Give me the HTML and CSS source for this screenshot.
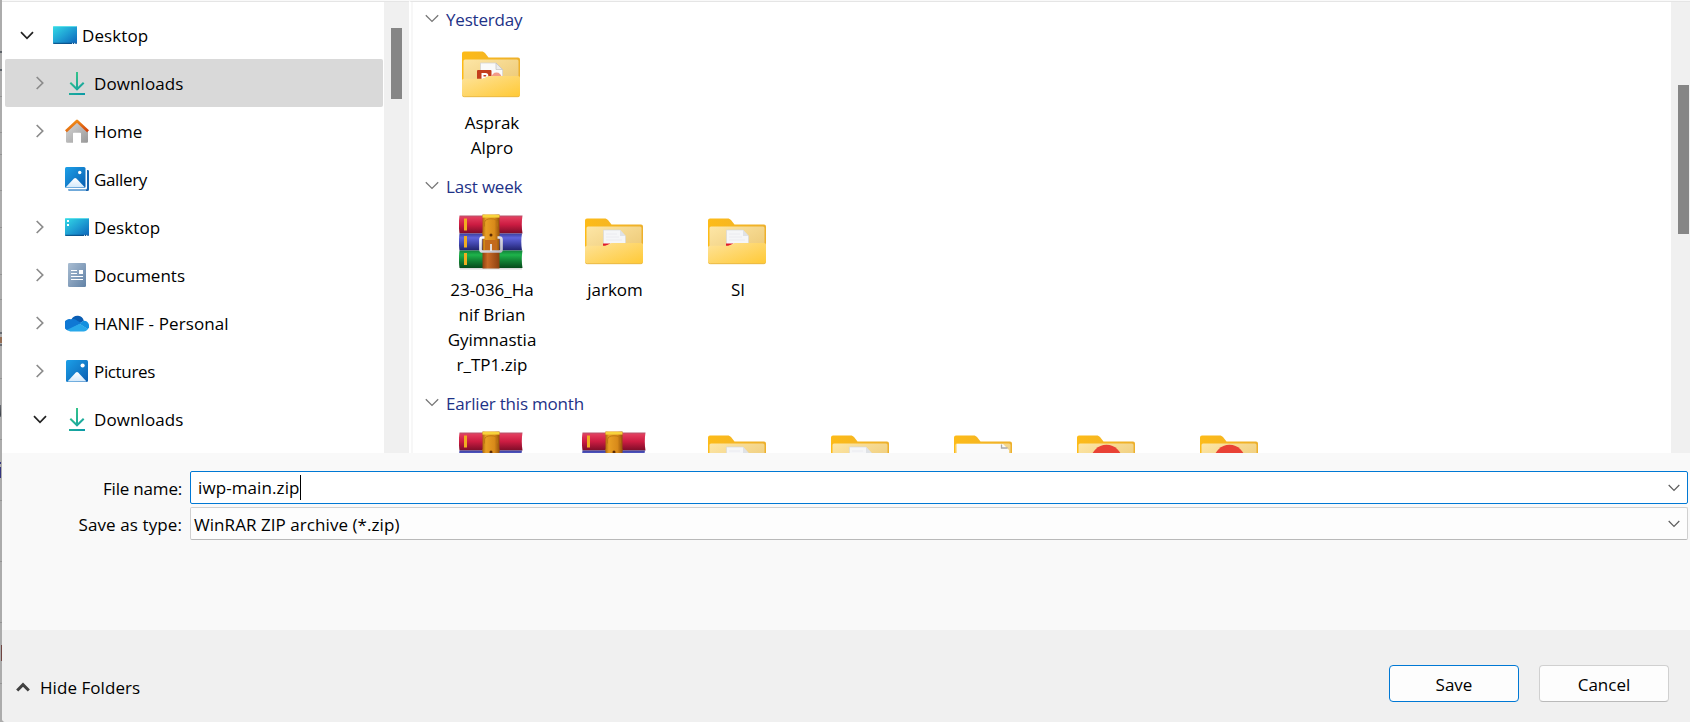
FILE: index.html
```html
<!DOCTYPE html>
<html lang="en">
<head>
<meta charset="utf-8">
<title>Save As</title>
<link rel="stylesheet" href="styles.css">
</head>
<body>
<svg class="defs" width="0" height="0" aria-hidden="true">
  <defs>
    <linearGradient id="g-desk" x1="0" y1="0" x2="1" y2="1"><stop offset="0" stop-color="#34dbe6"/><stop offset=".5" stop-color="#1fa0d4"/><stop offset="1" stop-color="#0b62b8"/></linearGradient>
    <linearGradient id="g-down" gradientUnits="userSpaceOnUse" x1="4" y1="2" x2="20" y2="22"><stop offset="0" stop-color="#3ccb85"/><stop offset="1" stop-color="#0d9ba6"/></linearGradient>
    <linearGradient id="g-roof" x1="0" y1="0" x2="1" y2="1"><stop offset="0" stop-color="#f9a01b"/><stop offset="1" stop-color="#d1410c"/></linearGradient>
    <linearGradient id="g-wall" x1="0" y1="0" x2="1" y2="1"><stop offset="0" stop-color="#dadada"/><stop offset="1" stop-color="#989898"/></linearGradient>
    <linearGradient id="g-pic" x1="0" y1="0" x2="1" y2="1"><stop offset="0" stop-color="#1ca0e8"/><stop offset="1" stop-color="#0a5db0"/></linearGradient>
    <linearGradient id="g-hill" x1="0" y1="0" x2="0" y2="1"><stop offset="0" stop-color="#ffffff"/><stop offset="1" stop-color="#d3e9fb"/></linearGradient>
    <linearGradient id="g-doc" x1="0" y1="0" x2="1" y2="1"><stop offset="0" stop-color="#a9bdd2"/><stop offset="1" stop-color="#6282a6"/></linearGradient>
    <linearGradient id="g-inner" x1="0" y1="0" x2="1" y2="1"><stop offset="0" stop-color="#fde6a6"/><stop offset="1" stop-color="#ebc671"/></linearGradient>
    <linearGradient id="g-front" x1="0" y1="0" x2="1" y2="1"><stop offset="0" stop-color="#fee39a"/><stop offset="1" stop-color="#ffc935"/></linearGradient>
    <linearGradient id="g-back" x1="0" y1="0" x2="1" y2="0"><stop offset="0" stop-color="#fdbb18"/><stop offset="1" stop-color="#edb02c"/></linearGradient>
    <linearGradient id="g-red" x1="0" y1="0" x2="0" y2="1"><stop offset="0" stop-color="#b8566d"/><stop offset=".12" stop-color="#e23b5c"/><stop offset=".5" stop-color="#cc1c42"/><stop offset="1" stop-color="#7c0d28"/></linearGradient>
    <linearGradient id="g-blue" x1="0" y1="0" x2="0" y2="1"><stop offset="0" stop-color="#3b3f9c"/><stop offset=".25" stop-color="#5f64dc"/><stop offset=".6" stop-color="#4145ac"/><stop offset="1" stop-color="#20226a"/></linearGradient>
    <linearGradient id="g-green" x1="0" y1="0" x2="0" y2="1"><stop offset="0" stop-color="#12803a"/><stop offset=".25" stop-color="#1eb34b"/><stop offset=".6" stop-color="#118033"/><stop offset="1" stop-color="#064a1b"/></linearGradient>
    <linearGradient id="g-strap" x1="0" y1="0" x2="1" y2="0"><stop offset="0" stop-color="#b06a0c"/><stop offset=".2" stop-color="#e89f24"/><stop offset=".7" stop-color="#d88a1a"/><stop offset="1" stop-color="#96520a"/></linearGradient>
    <linearGradient id="g-strap2" x1="0" y1="0" x2="1" y2="0"><stop offset="0" stop-color="#8e4010"/><stop offset=".3" stop-color="#c96a26"/><stop offset="1" stop-color="#8a400f"/></linearGradient>
    <linearGradient id="g-buckle" x1="0" y1="0" x2="1" y2="1"><stop offset="0" stop-color="#ffffff"/><stop offset="1" stop-color="#b9b9c5"/></linearGradient>

    <symbol id="i-open" viewBox="0 0 14 9"><path d="M1 1.2 7 7.4 13 1.2" fill="none" stroke="#222" stroke-width="1.7"/></symbol>
    <symbol id="i-closed" viewBox="0 0 9 14"><path d="M1.2 1 7.2 7 1.2 13" fill="none" stroke="#8b8b8b" stroke-width="1.7"/></symbol>
    <symbol id="i-group" viewBox="0 0 14 9"><path d="M.8 1.2 7 7.4 13.2 1.2" fill="none" stroke="#777" stroke-width="1.3"/></symbol>
    <symbol id="i-desk" viewBox="0 0 24 24"><rect y="3" width="24" height="18" rx="1.3" fill="url(#g-desk)"/><path d="M.3 20.3h23.4" stroke="#0b4a80" stroke-width="1"/><path d="M0.8 3.5h22.4" stroke="#69e6ee" stroke-width=".8"/><path d="M19 20.4h1m1 0h1m.6 0h.6" stroke="#d6ebf7" stroke-width="1"/></symbol>
    <symbol id="i-desk2" viewBox="0 0 24 24"><use href="#i-desk"/><path d="M2 5h2v2H2zM2 9h2v2H2z" fill="#fff"/></symbol>
    <symbol id="i-down" viewBox="0 0 24 24"><path d="M12 1v17.2M5.3 11.7 12 18.3l6.700-6.600M4 23h16" fill="none" stroke="url(#g-down)" stroke-width="2"/></symbol>
    <symbol id="i-home" viewBox="0 0 24 24"><path d="M1 12 12 2l11 10v10.500a1.200 1.200 0 0 1-1.200 1.200H16V14.500a.8.800 0 0 0-.8-.8H8.800a.8.800 0 0 0-.8.800v9.200H2.200A1.200 1.200 0 0 1 1 22.500z" fill="url(#g-wall)"/><path d="M.9 12.300 12 2l11.100 10.300" fill="none" stroke="url(#g-roof)" stroke-width="2.800" stroke-linejoin="round"/></symbol>
    <symbol id="i-gal" viewBox="0 0 24 24"><path d="M22 3h.7a1.300 1.300 0 0 1 1.300 1.300V22.500a1.500 1.500 0 0 1-1.500 1.500H5a2 2 0 0 1-2-1.500h17.500a1.500 1.500 0 0 0 1.500-1.500z" fill="#1763ad"/><path d="M3 22.500h18v1.500H5a2 2 0 0 1-2-1.500z" fill="#6fa9da"/><rect width="20.500" height="21" rx="1.500" fill="url(#g-pic)"/><path d="M.5 20.500 9 11.600a1.700 1.700 0 0 1 2.400 0l8.600 8.900z" fill="url(#g-hill)"/><circle cx="14.700" cy="5.500" r="1.700" fill="#fff"/></symbol>
    <symbol id="i-pic" viewBox="0 0 24 24"><rect x="1" y="1" width="22" height="22" rx="1.500" fill="url(#g-pic)"/><path d="M2.500 22.500 10.800 13.500a1.700 1.700 0 0 1 2.400 0l8.300 9z" fill="url(#g-hill)"/><circle cx="17.600" cy="6.500" r="2.100" fill="#fff"/></symbol>
    <symbol id="i-doc" viewBox="0 0 24 24"><rect x="3" width="18" height="24" rx="1.300" fill="url(#g-doc)"/><path d="M6 7.500h6M6 10.500h6M6 13.500h12M6 16.500h12" stroke="#fff" stroke-width="1"/><rect x="14" y="7" width="4" height="4" fill="#fff"/></symbol>
    <symbol id="i-cloud" viewBox="0 0 24 24"><path d="M6.500 8.300A6.600 6.600 0 0 1 18.800 9.700L12 14z" fill="#0a5db3"/><path d="M6 8.300c2-.5 4.200 0 5.900 1.200l4.600 2.800L3 19.500A5.700 5.700 0 0 1 6 8.300z" fill="#0f78d4"/><path d="M18.800 9.700a5.100 5.100 0 0 1 3.900 8.600l-8-5.400c1.300-1.700 2.300-2.700 4.100-3.200z" fill="#1490df"/><path d="M2.200 18.700 14.700 12.700l8.200 5.300c-1 1.600-2.300 2.500-4.200 2.500H6.500c-1.800 0-3.200-.6-4.300-1.800z" fill="#28a8ea"/></symbol>

    <symbol id="i-fback" viewBox="0 0 64 64"><path d="M3 11.500a2 2 0 0 1 2-2h17.500c1.600 0 2.600.5 3.500 1.600l3.500 4.400h29.500a2 2 0 0 1 2 2V45H3z" fill="url(#g-back)"/><path d="M4.500 19a1.500 1.500 0 0 1 1.500-1.500h52a1.500 1.500 0 0 1 1.500 1.500V45H4.500z" fill="url(#g-inner)"/></symbol>
    <symbol id="i-ffront" viewBox="0 0 64 64"><path d="M3 38.200q0-1.500 2-1.500h17c3.500 0 5-2.800 9-2.800h28q2 0 2 1.500V52.800a2 2 0 0 1-2 2H5a2 2 0 0 1-2-2z" fill="url(#g-front)"/><path d="M3.300 53.700q.6 1 2 1h53.400q1.400 0 2-1" fill="none" stroke="#e5ac2c" stroke-width=".8"/></symbol>
    <symbol id="i-paper" viewBox="0 0 64 64"><path d="M21.500 21h16.500l5.500 6V40H21.500z" fill="#f5f6f8" stroke="#d9d9d9" stroke-width=".7"/><path d="M38 21v6h5.500" fill="#dfe2e6"/><path d="M24 25h11M24 28h13M24 31h16" stroke="#e8eaed" stroke-width=".8"/></symbol>
    <symbol id="i-folder" viewBox="0 0 64 64"><use href="#i-fback"/><use href="#i-paper"/><path d="M21 34.500h7.500L24 38h-3z" fill="#e01c2c"/><use href="#i-ffront"/></symbol>
    <symbol id="i-folder-paper" viewBox="0 0 64 64"><use href="#i-fback"/><use href="#i-paper"/><use href="#i-ffront"/></symbol>
    <symbol id="i-folder-sheet" viewBox="0 0 64 64"><use href="#i-fback"/><path d="M6 18h46l6 6V40H6z" fill="#fafafa"/><path d="M50.500 18.500v3.500h6" fill="none" stroke="#a8a8a8" stroke-width="1.300"/><use href="#i-ffront"/></symbol>
    <symbol id="i-folder-red" viewBox="0 0 64 64"><use href="#i-fback"/><circle cx="32.500" cy="34.500" r="15.700" fill="#e94235"/><use href="#i-ffront"/></symbol>
    <symbol id="i-folder-ppt" viewBox="0 0 64 64"><use href="#i-fback"/><path d="M21.500 21h15.500l6.500 6.500V40H21.500z" fill="#fafafa" stroke="#d4d4d4" stroke-width=".8"/><path d="M37 21v6.500h6.500z" fill="#ececec" stroke="#bbb" stroke-width=".6"/><circle cx="37.500" cy="35.500" r="5" fill="#f39a88"/><rect x="18" y="28" width="14.500" height="13" rx="1" fill="#c43e1c"/><path d="M23.500 38v-6h3a1.800 1.800 0 0 1 0 3.600h-2.500" fill="none" stroke="#fff" stroke-width="2"/><use href="#i-ffront"/></symbol>
    <symbol id="i-rar" viewBox="0 0 64 64">
      <path d="M1 59h62v1.500H1z" fill="#000" opacity=".14"/>
      <path d="M.5 6.500h63q-1.400 9 0 18H.5q-1.200-9 0-18z" fill="url(#g-red)"/>
      <path d="M.5 24.500h62.500q-1.400 8 0 17H.5q-1.200-8.500 0-17z" fill="url(#g-blue)"/>
      <path d="M.5 41.500h63q-1.400 9 0 17.500H.5q-1.200-9 0-17.500z" fill="url(#g-green)"/>
      <path d="M5 9.500H8v12H5zM5 27H8v11.500H5zM5 44H8v12H5z" fill="#f0ad20"/>
      <path d="M23.500 5.500h17V25h-17z" fill="url(#g-strap)"/><path d="M23.500 5.800h17v2.800h-17z" fill="#f7d33c"/><path d="M25.500 17.500v-4c0-5 13-5 13 0v4" fill="none" stroke="#b97510" stroke-width=".8"/>
      <path d="M23.500 23h17v19.500h-17z" fill="url(#g-strap)"/><path d="M26 31h12v10H26z" fill="#c36a1c"/><path d="M23.500 41.500h17v18h-17z" fill="url(#g-strap2)"/>
      <circle cx="32" cy="26" r="1.500" fill="#5d2b05"/>
      <path d="M25.500 28.500h-2a2 2 0 0 0-2 2V40.500a2 2 0 0 0 2 2h17a2 2 0 0 0 2-2v-10a2 2 0 0 0-2-2H38.500" fill="none" stroke="url(#g-buckle)" stroke-width="2.700"/><path d="M32 35v7" stroke="#e9e9ee" stroke-width="1.800"/>
    </symbol>
  </defs>
</svg>

<div class="screen">
  <svg class="edge" viewBox="0 0 2 722" width="2" height="722">
    <rect width="2" height="722" fill="#acacac"/>
    <path d="M0 52h2M0 70h2" stroke="#5f646a" stroke-width="2"/>
    <path d="M0 96.500h2M0 132.500h2M0 154.500h2M0 190.500h2M0 227.500h2M0 274.500h2M0 299.500h2M0 378.500h2M0 439.500h2M0 500.500h2M0 561.500h2M0 622.500h2M0 683.500h2" stroke="#949494"/>
    <path d="M0 333h2M0 345h2M0 405v11h1" stroke="#50555f" stroke-width="1.500"/><path d="M1 337v6" stroke="#8c5a38" stroke-width="1.500"/>
    <path d="M.5 462v2M.5 467v11" stroke="#35357f"/><path d="M1.500 645v16" stroke="#704542"/>
  </svg>
  <div class="dialog">
    <div class="browser">
      <nav class="tree">
        <div class="row root"><svg class="chev open"><use href="#i-open"/></svg><svg class="ico"><use href="#i-desk"/></svg><span class="loose">Desktop</span></div>
        <div class="row selected"><svg class="chev"><use href="#i-closed"/></svg><svg class="ico"><use href="#i-down"/></svg><span class="loose">Downloads</span></div>
        <div class="row"><svg class="chev"><use href="#i-closed"/></svg><svg class="ico"><use href="#i-home"/></svg><span class="loose">Home</span></div>
        <div class="row"><svg class="chev"></svg><svg class="ico gallery"><use href="#i-gal"/></svg><span class="tight">Gallery</span></div>
        <div class="row"><svg class="chev"><use href="#i-closed"/></svg><svg class="ico"><use href="#i-desk2"/></svg><span class="loose">Desktop</span></div>
        <div class="row"><svg class="chev"><use href="#i-closed"/></svg><svg class="ico"><use href="#i-doc"/></svg><span>Documents</span></div>
        <div class="row"><svg class="chev"><use href="#i-closed"/></svg><svg class="ico"><use href="#i-cloud"/></svg><span class="loose">HANIF - Personal</span></div>
        <div class="row"><svg class="chev"><use href="#i-closed"/></svg><svg class="ico"><use href="#i-pic"/></svg><span class="tight">Pictures</span></div>
        <div class="row"><svg class="chev open"><use href="#i-open"/></svg><svg class="ico"><use href="#i-down"/></svg><span class="loose">Downloads</span></div>
      </nav>
      <div class="scroll tree-scroll"><div class="thumb"></div></div>
      <div class="splitter"></div>
      <main class="files">
        <section class="group">
          <h2 class="group-title"><svg class="gchev"><use href="#i-group"/></svg>Yesterday</h2>
          <div class="items">
            <div class="item"><svg class="big"><use href="#i-folder-ppt"/></svg><span>Asprak<br>Alpro</span></div>
          </div>
        </section>
        <section class="group">
          <h2 class="group-title"><svg class="gchev"><use href="#i-group"/></svg>Last week</h2>
          <div class="items">
            <div class="item"><svg class="big"><use href="#i-rar"/></svg><span>23-036_Ha<br>nif Brian<br>Gyimnastia<br>r_TP1.zip</span></div>
            <div class="item"><svg class="big"><use href="#i-folder"/></svg><span>jarkom</span></div>
            <div class="item"><svg class="big"><use href="#i-folder"/></svg><span>SI</span></div>
          </div>
        </section>
        <section class="group">
          <h2 class="group-title"><svg class="gchev"><use href="#i-group"/></svg>Earlier this month</h2>
          <div class="items">
            <div class="item"><svg class="big"><use href="#i-rar"/></svg></div>
            <div class="item"><svg class="big"><use href="#i-rar"/></svg></div>
            <div class="item"><svg class="big"><use href="#i-folder-paper"/></svg></div>
            <div class="item"><svg class="big"><use href="#i-folder-paper"/></svg></div>
            <div class="item"><svg class="big"><use href="#i-folder-sheet"/></svg></div>
            <div class="item"><svg class="big"><use href="#i-folder-red"/></svg></div>
            <div class="item"><svg class="big"><use href="#i-folder-red"/></svg></div>
          </div>
        </section>
      </main>
      <div class="scroll file-scroll"><div class="thumb"></div></div>
    </div>
    <div class="form">
      <div class="label name-label">File name:</div>
      <div class="field focus"><span class="loose">iwp-main.zip</span><i class="caret"></i><svg class="drop" viewBox="0 0 12 8"><path d="M.7 1 6 6.500 11.300 1" fill="none" stroke="#5c5c5c" stroke-width="1.200"/></svg></div>
      <div class="label loose">Save as type:</div>
      <div class="field type"><span class="wide">WinRAR ZIP archive (*.zip)</span><svg class="drop" viewBox="0 0 12 8"><path d="M.7 1 6 6.500 11.300 1" fill="none" stroke="#5c5c5c" stroke-width="1.200"/></svg></div>
    </div>
    <footer class="footer">
      <div class="hide"><svg class="up" viewBox="0 0 14 10"><path d="M1.200 8.500 7 2.700l5.800 5.800" fill="none" stroke="#404040" stroke-width="3"/></svg><span class="wide">Hide Folders</span></div>
      <div class="actions"><button class="btn primary">Save</button><button class="btn">Cancel</button></div>
    </footer>
  </div>
</div>
</body>
</html>
```
FILE: styles.css
```css
* { box-sizing: border-box; }
body { margin: 0; font: 17px/25px "Open Sans", "Noto Sans", sans-serif; color: #000; overflow: hidden; }
.defs { position: absolute; }
svg { display: block; flex: none; }
.screen { display: flex; width: 1690px; height: 722px; overflow: hidden; background: #acacac; }
.edge { width: 2px; height: 722px; }
.dialog { flex: 1; min-width: 0; display: flex; flex-direction: column; background: #f9f9f9; border-bottom-left-radius: 4px; }
.browser { display: flex; height: 453px; padding-top: 1px; background: #fff; box-shadow: inset 0 1px #f9f9f9; }
.browser > * { border-top: 1px solid #e5e5e5; }
.tree { width: 382px; padding: 9px 1px 0 3px; background: #fff; }
.row { display: flex; align-items: center; height: 48px; padding-left: 28px; border-radius: 2px; white-space: nowrap; }
.row.root { padding-left: 13px; }
.row.selected { background: #d9d9d9; }
.chev { width: 14px; height: 14px; margin-right: 18px; }
.chev.open { height: 9px; }
.row.root .chev { margin-left: 2px; margin-right: 19px; }
.ico { width: 24px; height: 24px; margin-right: 5px; }
.loose { letter-spacing: .1px; }
.wide { letter-spacing: .06px; }
.tight { letter-spacing: -.35px; }
.scroll { background: #f0f0f0; }
.tree-scroll { width: 25px; padding: 26px 7px 0; }
.tree-scroll .thumb { height: 71px; }
.thumb { width: 11px; background: #868686; }
.splitter { width: 4px; background: #f7f7f7; border-left: 2px solid #fff; }
.files { flex: 1; height: 452px; padding: 2px 0 0 13px; overflow: hidden; background: #fff; }
.group { height: 167px; }
.group + .group { height: 217px; }
.group-title { display: flex; align-items: center; height: 30px; margin: 0 0 2px; font-size: 17px; font-weight: 400; letter-spacing: -.2px; color: #1e3287; }
.gchev { width: 14px; height: 9px; margin: 0 7px 1px -1px; }
.items { display: flex; padding: 6px 0 0 4px; }
.item { display: flex; flex-direction: column; align-items: center; gap: 4px; width: 123px; text-align: center; }
.item span { padding-left: 1px; }
.big { width: 64px; height: 64px; margin-right: 1px; }
.file-scroll { width: 19px; padding: 83px 0 0 7px; }
.file-scroll .thumb { height: 149px; }
.form { display: grid; grid-template-columns: 180px 1498px; grid-auto-rows: 33px; gap: 3px 8px; height: 177px; padding-top: 18px; }
.label { text-align: right; line-height: 36px; }
.name-label { letter-spacing: -.2px; }
.field { display: flex; align-items: center; padding: 0 7px 0 3px; background: #fdfdfd; border: 1px solid #d0d0d0; border-bottom-color: #b9b9b9; border-radius: 2px; }
.field.type span { padding-top: 2px; }
.field.focus { padding-left: 7px; background: #fff; border-color: #0078d4; }
.caret { width: 1px; height: 25px; background: #000; }
.drop { width: 12px; height: 8px; margin-left: auto; }
.footer { flex: 1; display: flex; justify-content: space-between; padding: 34px 21px 0 14px; background: #f0f0f0; border-bottom-left-radius: 4px; }
.hide { display: flex; align-items: center; gap: 10px; height: 46px; }
.up { width: 14px; height: 10px; }
.actions { display: flex; gap: 20px; padding-top: 1px; }
.btn { width: 130px; height: 37px; padding: 2px 0 0; font: inherit; color: #000; background: #fdfdfd; border: 1px solid #d0d0d0; border-bottom-color: #bababa; border-radius: 4px; }
.btn.primary { border-color: #0078d4; }
```
